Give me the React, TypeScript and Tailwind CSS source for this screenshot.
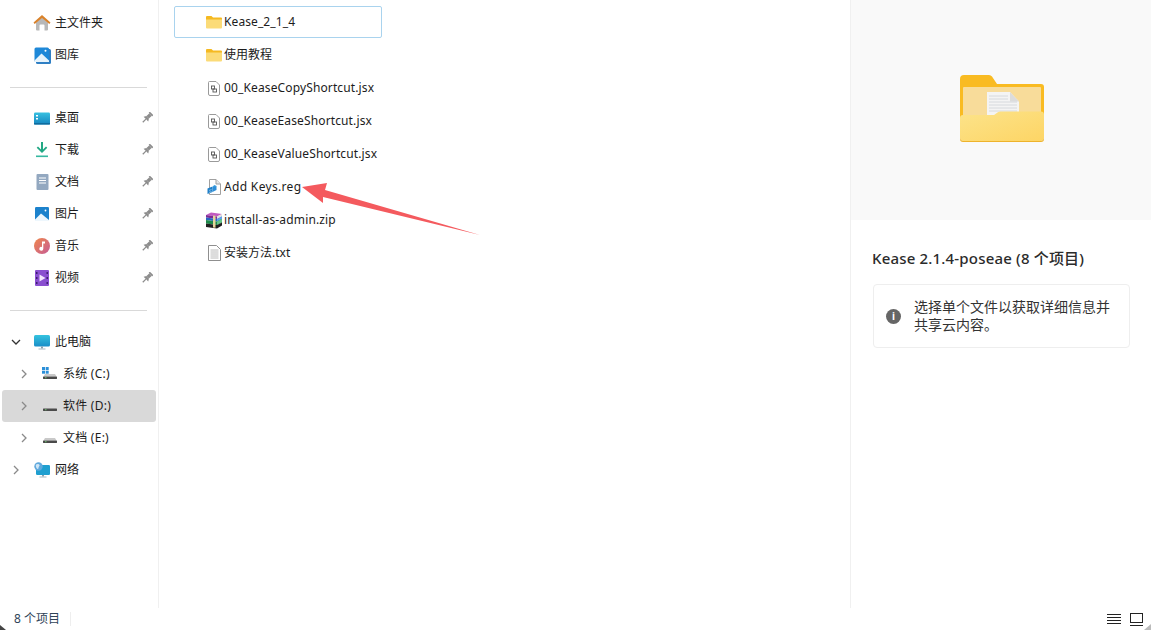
import React from 'react'

const font = "font-['Noto_Sans','Noto_Sans_CJK_SC',sans-serif]"

const HomeIcon = () => (
  <svg width="18" height="18" viewBox="0 0 18 18">
    <path d="M3 8.500 9 3.500l6 5V15.500a1 1 0 0 1-1 1h-2.500V11.500a1 1 0 0 0-1-1H7.500a1 1 0 0 0-1 1v5H4a1 1 0 0 1-1-1z" fill="#b8b8b8" />
    <path d="M9 1 17.500 8.500 16.300 10 9 4 1.700 10 .5 8.500z" fill="#d9822b" />
  </svg>
)

const GalleryIcon = () => (
  <svg width="17" height="17" viewBox="0 0 17 17">
    <rect x="2" y="2" width="15" height="15" rx="1.500" fill="#2f7fc4" />
    <rect x="0.500" y="0.500" width="14.500" height="14.500" rx="1.500" fill="#1e88d8" />
    <path d="M0.500 13.500 7.500 6.500 15 13.500V15H0.500z" fill="#e8f4fc" />
    <circle cx="11.500" cy="3.800" r="1" fill="#fff" />
  </svg>
)

const DesktopIcon = () => (
  <svg width="16" height="13" viewBox="0 0 16 13">
    <defs>
      <linearGradient id="dsk" x1="0" y1="0" x2="0" y2="1">
        <stop offset="0" stopColor="#37c0e0" />
        <stop offset="1" stopColor="#1585c0" />
      </linearGradient>
    </defs>
    <rect x="0" y="0.500" width="16" height="12" rx="1.200" fill="url(#dsk)" />
    <rect x="2" y="3" width="2" height="1.500" fill="#fff" />
    <rect x="2" y="6" width="2" height="1.500" fill="#fff" />
    <rect x="0" y="11" width="16" height="1.500" fill="#0f6c9e" />
  </svg>
)

const DownloadIcon = () => (
  <svg width="14" height="16" viewBox="0 0 14 16">
    <path d="M6 0h2v7.500l3-3L12.300 5.800 7 11 1.700 5.800 3 4.500l3 3z" fill="#22a884" />
    <rect x="1" y="13.500" width="12" height="1.600" fill="#35b8a0" />
  </svg>
)

const DocIcon = () => (
  <svg width="13" height="16" viewBox="0 0 13 16">
    <rect x="0.500" y="0" width="12" height="16" rx="1" fill="#93a8c0" />
    <rect x="3" y="3.500" width="7" height="1" fill="#fff" />
    <rect x="3" y="6" width="7" height="1" fill="#fff" />
    <rect x="3" y="8.500" width="7" height="1" fill="#fff" />
  </svg>
)

const PictureIcon = () => (
  <svg width="14" height="14" viewBox="0 0 14 14">
    <rect width="14" height="14" rx="1.200" fill="#1c82cc" />
    <path d="M0 12.500 6 6.500 14 13V14H0z" fill="#eef7fd" />
    <circle cx="10.500" cy="3.500" r="0.900" fill="#fff" />
  </svg>
)

const MusicIcon = () => (
  <svg width="16" height="16" viewBox="0 0 16 16">
    <defs>
      <linearGradient id="mus" x1="0" y1="0" x2="1" y2="1">
        <stop offset="0" stopColor="#f0874a" />
        <stop offset="1" stopColor="#c65c96" />
      </linearGradient>
    </defs>
    <circle cx="8" cy="8" r="8" fill="url(#mus)" />
    <path d="M8 3.500h3V5.500H9.300v5.300a2 2 0 1 1-1.300-1.900z" fill="#fff" />
  </svg>
)

const VideoIcon = () => (
  <svg width="14" height="16" viewBox="0 0 14 16">
    <rect width="14" height="16" rx="1" fill="#8a4fd0" />
    <path d="M4.500 4.500 10.500 8l-6 3.500z" fill="#f1e4fc" />
    <rect x="1" y="2" width="1.500" height="2" fill="#3d1f70" />
    <rect x="1" y="7" width="1.500" height="2" fill="#3d1f70" />
    <rect x="1" y="12" width="1.500" height="2" fill="#3d1f70" />
    <rect x="11.500" y="2" width="1.500" height="2" fill="#3d1f70" />
    <rect x="11.500" y="7" width="1.500" height="2" fill="#3d1f70" />
    <rect x="11.500" y="12" width="1.500" height="2" fill="#3d1f70" />
  </svg>
)

const MonitorIcon = () => (
  <svg width="16" height="15" viewBox="0 0 16 15">
    <defs>
      <linearGradient id="mon" x1="0" y1="0" x2="0" y2="1">
        <stop offset="0" stopColor="#35c3df" />
        <stop offset="1" stopColor="#1a8ec8" />
      </linearGradient>
    </defs>
    <rect x="0" y="0" width="16" height="11.500" rx="1.500" fill="url(#mon)" />
    <rect x="7" y="11.500" width="2" height="2" fill="#8aa0ad" />
    <rect x="4.500" y="13.500" width="7" height="1" fill="#a8bac4" />
  </svg>
)

const DriveIcon = ({ win, flat }: { win?: boolean; flat?: boolean }) => (
  <svg width="16" height="14" viewBox="0 0 16 14">
    {win && (
      <g fill="#2b8fd8">
        <rect x="0" y="0" width="3" height="3" />
        <rect x="3.700" y="0" width="3" height="3" />
        <rect x="0" y="3.700" width="3" height="3" />
        <rect x="3.700" y="3.700" width="3" height="3" />
      </g>
    )}
    {!flat && <path d="M3 7h10l1.500 2.500h-13z" fill="#c9c9c9" />}
    <rect x="1" y="9.500" width="14" height="2.500" rx="0.400" fill="#4a4a4a" />
    <rect x="3" y="10.300" width="1.500" height="0.900" fill="#6fd06f" />
  </svg>
)

const NetworkIcon = () => (
  <svg width="16" height="16" viewBox="0 0 16 16">
    <rect x="2" y="3" width="14" height="10" rx="1.200" fill="#1f9fd0" />
    <rect x="8" y="13" width="2" height="1.500" fill="#8aa0ad" />
    <rect x="5.500" y="14.500" width="7" height="1" fill="#a8bac4" />
    <circle cx="4.500" cy="4.500" r="4.200" fill="#5fa8dc" />
    <path d="M2 2.500c1.500-1 3-.5 3.500.5s-1 1.500-1 3-1.500 1-2 0-1-2.500-.5-3.500z" fill="#cfe6f6" />
  </svg>
)

const Pin = () => (
  <svg width="12" height="12" viewBox="0 0 12 12" className="ml-auto mr-[3px]">
    <g transform="rotate(45 6 6)" fill="#8c8c8c">
      <rect x="3.500" y="-0.500" width="5" height="1.800" rx="0.300" />
      <rect x="4.300" y="1.300" width="3.400" height="3.700" />
      <path d="M4.300 5H7.700L9.300 7.500H2.700z" />
      <rect x="5.400" y="7.500" width="1.200" height="4.500" />
    </g>
  </svg>
)

const Chevron = ({ down }: { down?: boolean }) => (
  <svg width="10" height="10" viewBox="0 0 10 10">
    {down ? (
      <path d="M1 3l4 4 4-4" fill="none" stroke="#333" strokeWidth="1.300" />
    ) : (
      <path d="M3 1l4 4-4 4" fill="none" stroke="#8a8a8a" strokeWidth="1.300" />
    )}
  </svg>
)

const FolderSmall = () => (
  <svg width="16" height="14" viewBox="0 0 16 14">
    <path d="M0 2a1 1 0 0 1 1-1h4.500L7 2.500h8a1 1 0 0 1 1 1V5H0z" fill="#f5b921" />
    <path d="M0 4.500h16V12.500a1 1 0 0 1-1 1H1a1 1 0 0 1-1-1z" fill="#fbdb78" />
  </svg>
)

const JsxIcon = () => (
  <svg width="12" height="15" viewBox="0 0 12 15">
    <path d="M1.500 0.500H8L11.500 4V13a1.500 1.500 0 0 1-1.500 1.500H2A1.500 1.500 0 0 1 .5 13V1.500a1 1 0 0 1 1-1z" fill="#fff" stroke="#9a9a9a" />
    <rect x="3.500" y="5" width="3" height="3" fill="none" stroke="#555" strokeWidth="0.900" />
    <rect x="5" y="8" width="3.500" height="3" fill="none" stroke="#555" strokeWidth="0.900" />
  </svg>
)

const RegIcon = () => (
  <svg width="14" height="16" viewBox="0 0 14 16">
    <path d="M2.500 0.500H9L13.500 5V15.500H2.500z" fill="#fff" stroke="#a0a0a0" />
    <path d="M9 0.500V5H13.500" fill="#e8e8e8" stroke="#a0a0a0" />
    <path d="M0.500 9.500 5.500 7.500V13L0.500 15z" fill="#1f7fc8" />
    <path d="M5.500 7.500 7.500 8.500 9.500 7 7.500 6z" fill="#39a0e0" />
    <path d="M5.500 8 9.500 7V11L5.500 13z" fill="#2f8fd8" />
    <path d="M2 11.500 4.500 10.500M2 13.500 4.500 12.500" stroke="#bfe0f5" strokeWidth="0.600" />
  </svg>
)

const ZipIcon = () => (
  <svg width="16" height="17" viewBox="0 0 16 17">
    <path d="M0 3 5 0.500 16 2 11 4.500z" fill="#c25ac0" />
    <path d="M0 3 11 4.500V7L0 5.500z" fill="#7d2a96" />
    <path d="M11 4.500 16 2V4.500L11 7z" fill="#e0e0e0" />
    <path d="M0 5.500 11 7 16 4.500V7L11 9.500 0 8z" fill="#2a66c0" />
    <path d="M11 7 16 4.500V7L11 9.500z" fill="#5fa0e8" />
    <path d="M0 8 11 9.500 16 7V10.500L11 13 0 11.500z" fill="#1d8a4a" />
    <path d="M11 9.500 16 7V10.500L11 13z" fill="#66c488" />
    <path d="M0 11.500 11 13 16 10.500V13.500L11 16.500 0 15z" fill="#1f1f1f" />
    <path d="M7 3.500 9.500 3.800V15.700L7 15.400z" fill="#e6d59a" />
  </svg>
)

const TxtIcon = () => (
  <svg width="13" height="16" viewBox="0 0 13 16">
    <path d="M0.500 0.500H8.500L12.500 4.500V15.500H0.500z" fill="#fff" stroke="#8f8f8f" />
    <path d="M2.500 5h8M2.500 7h8M2.500 9h8M2.500 11h8M2.500 13h8" stroke="#a8a8a8" strokeWidth="0.800" />
  </svg>
)

const FolderLarge = () => (
  <svg width="84" height="67" viewBox="0 0 84 67">
    <defs>
      <linearGradient id="flap" x1="0" y1="0" x2="1" y2="1">
        <stop offset="0" stopColor="#fce38a" />
        <stop offset="1" stopColor="#fdd565" />
      </linearGradient>
    </defs>
    <path d="M0 4a4 4 0 0 1 4-4h25a4 4 0 0 1 3 1.500L37 9h44a3 3 0 0 1 3 3v35H0z" fill="#f9bb22" />
    <rect x="3" y="12" width="78" height="32" rx="1" fill="#f8dc9a" />
    <path d="M27 17h23l9 9.500V42H27z" fill="#f4f4f4" />
    <path d="M50 17l9 9.500h-9z" fill="#dcdcdc" />
    <path d="M29 21h19M29 24h19M29 27h28M29 30h28M29 33h28M29 36h28" stroke="#cfd3d8" strokeWidth="0.800" />
    <path d="M0 43a3 3 0 0 1 3-3h31l3.500-2.500a5 5 0 0 1 3-1H81a3 3 0 0 1 3 3V62a4 4 0 0 1-4 4H4a4 4 0 0 1-4-4z" fill="url(#flap)" />
    <path d="M0 62a4 4 0 0 0 4 4h76a4 4 0 0 0 4-4v2a3 3 0 0 1-3 3H3a3 3 0 0 1-3-3z" fill="#eeb32c" />
  </svg>
)

const navTop = [
  { name: '主文件夹', icon: <HomeIcon /> },
  { name: '图库', icon: <GalleryIcon /> },
]

const navPinned = [
  { name: '桌面', icon: <DesktopIcon /> },
  { name: '下载', icon: <DownloadIcon /> },
  { name: '文档', icon: <DocIcon /> },
  { name: '图片', icon: <PictureIcon /> },
  { name: '音乐', icon: <MusicIcon /> },
  { name: '视频', icon: <VideoIcon /> },
]

const drives = [
  { name: '系统 (C:)', icon: <DriveIcon win /> },
  { name: '软件 (D:)', icon: <DriveIcon flat />, active: true },
  { name: '文档 (E:)', icon: <DriveIcon /> },
]

const files = [
  { name: 'Kease_2_1_4', icon: <FolderSmall />, track: 'tracking-[0.1px]', selected: true },
  { name: '使用教程', icon: <FolderSmall />, track: '' },
  { name: '00_KeaseCopyShortcut.jsx', icon: <JsxIcon />, track: 'tracking-[0.13px]' },
  { name: '00_KeaseEaseShortcut.jsx', icon: <JsxIcon />, track: 'tracking-[0.13px]' },
  { name: '00_KeaseValueShortcut.jsx', icon: <JsxIcon />, track: 'tracking-[0.13px]' },
  { name: 'Add Keys.reg', icon: <RegIcon />, track: 'tracking-[0.33px]' },
  { name: 'install-as-admin.zip', icon: <ZipIcon />, track: 'tracking-[0.15px]' },
  { name: '安装方法.txt', icon: <TxtIcon />, track: '' },
]

const NavIcon = ({ children }: { children: React.ReactNode }) => (
  <span className="w-[18px] h-[18px] flex items-center justify-center shrink-0">{children}</span>
)

const Divider = () => <div className="h-[1px] bg-[#d9d9d9] ml-[10px] mr-[11px]" />

const App = () => {
  return (
    <div className={`relative w-[1151px] h-[630px] overflow-hidden bg-white text-[12px] text-[#1c1c1c] flex flex-col ${font}`}>
      <div className="flex h-[608px]">
        <aside className="w-[159px] shrink-0 border-r border-[#f0f0f0] pt-[7px]">
          {navTop.map((n) => (
            <div key={n.name} className="h-8 flex items-center pl-[33px] gap-[4px]">
              <NavIcon>{n.icon}</NavIcon>
              <span>{n.name}</span>
            </div>
          ))}
          <div className="mt-4 mb-[14px]"><Divider /></div>
          {navPinned.map((n) => (
            <div key={n.name} className="h-8 flex items-center pl-[33px] pr-[2px] gap-[4px]">
              <NavIcon>{n.icon}</NavIcon>
              <span>{n.name}</span>
              <Pin />
            </div>
          ))}
          <div className="mt-4 mb-[15px]"><Divider /></div>
          <div className="h-8 flex items-center pl-[11px] gap-[4px]">
            <span className="w-[10px] flex mr-[8px]"><Chevron down /></span>
            <NavIcon><MonitorIcon /></NavIcon>
            <span>此电脑</span>
          </div>
          {drives.map((d) => (
            <div key={d.name} className={`h-8 mx-[2px] rounded-[3px] flex items-center pl-[17px] ${d.active ? 'bg-[#d9d9d9]' : ''}`}>
              <span className="w-[10px] flex mr-[13px]"><Chevron /></span>
              <span className="w-[16px] flex mr-[5px]">{d.icon}</span>
              <span className="tracking-[0.25px]">{d.name}</span>
            </div>
          ))}
          <div className="h-8 flex items-center pl-[11px] gap-[4px]">
            <span className="w-[10px] flex mr-[8px]"><Chevron /></span>
            <NavIcon><NetworkIcon /></NavIcon>
            <span>网络</span>
          </div>
        </aside>

        <main className="flex-1 pt-[6px] pl-[15px] flex flex-col gap-[1px]">
          {files.map((f) => (
            <div
              key={f.name}
              className={`w-[208px] h-8 flex items-center pl-[30px] rounded-[2px] border ${f.selected ? 'border-[#a9d3ee]' : 'border-transparent'}`}
            >
              <span className="w-[18px] mr-[1px] flex justify-center shrink-0">{f.icon}</span>
              <span className={`whitespace-nowrap ${f.track}`}>{f.name}</span>
            </div>
          ))}
        </main>

        <section className="w-[301px] shrink-0 border-l border-[#f0f0f0]">
          <div className="h-[220px] bg-[#f9f9f9] flex items-center justify-center pb-[4px] pl-[2px]">
            <FolderLarge />
          </div>
          <div className="px-[21px] pt-[28px]">
            <h2 className="text-[15px] leading-5 font-medium tracking-[0.18px] text-[#2b2b2b] whitespace-nowrap">Kease 2.1.4-poseae (8 个项目)</h2>
            <div className="mt-[16px] ml-[1px] h-[64px] border border-[#eeeeee] rounded-[4px] flex items-center pl-[12px] pr-[16px] gap-[13px]">
              <span className="w-[15px] h-[15px] rounded-full bg-[#666666] text-white text-[10px] font-bold leading-[15px] text-center shrink-0">i</span>
              <p className="text-[14px] leading-[18px] text-[#333333]">选择单个文件以获取详细信息并共享云内容。</p>
            </div>
          </div>
        </section>
      </div>

      <footer className="h-[22px] flex items-center pl-[14px] pr-[8px] text-[#2f4358]">
        <span>8 个项目</span>
        <span className="w-[1px] h-[14px] bg-[#eeeeee] ml-[10px]" />
        <div className="ml-auto flex items-center gap-[9px]">
          <svg width="14" height="12" viewBox="0 0 14 12">
            <path d="M0 1.500h14M0 4.500h14M0 7.500h14M0 10.500h14" stroke="#222" strokeWidth="1.100" />
          </svg>
          <svg width="13" height="13" viewBox="0 0 13 13">
            <rect x="0.500" y="0.500" width="12" height="9" fill="none" stroke="#222" />
            <path d="M0 12.500h13" stroke="#222" />
          </svg>
        </div>
      </footer>

      {/* red arrow over the file list, plus the wallpaper showing at the window corners */}
      <svg className="absolute left-0 top-0 pointer-events-none" width="1151" height="630" viewBox="0 0 1151 630">
        <path d="M302 187 327 183 325 190 480 235 323 197 323 203z" fill="#f45a5e" />
        <path d="M0 625 6 630H0z" fill="#444" />
        <path d="M1151 624 1144 630H1151z" fill="#bbb" />
      </svg>
    </div>
  )
}

export default App
